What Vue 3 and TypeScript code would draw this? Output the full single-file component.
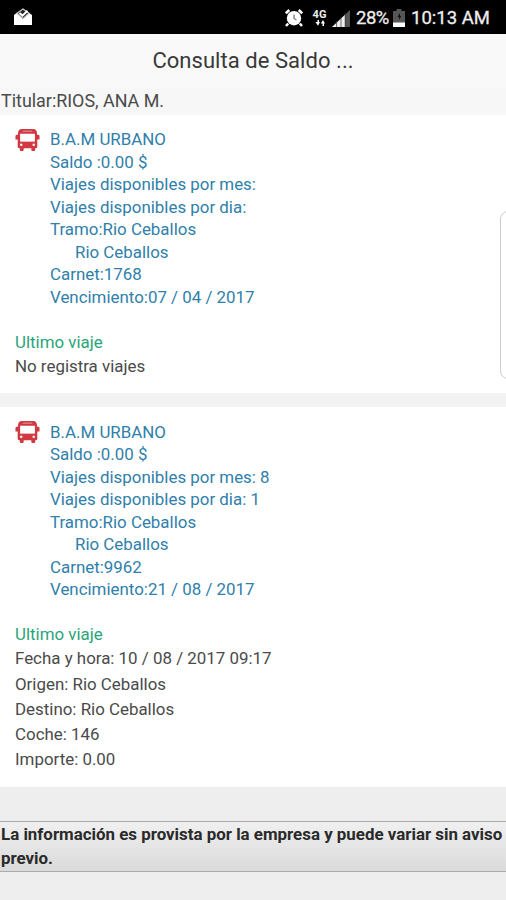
<script setup lang="ts">
interface Card {
  name: string
  balance: string
  perMonth: string
  perDay: string
  from: string
  to: string
  cardNumber: string
  expires: string
  lastTrip: string[]
}

const cards: Card[] = [
  {
    name: 'B.A.M URBANO',
    balance: '0.00 $',
    perMonth: '',
    perDay: '',
    from: 'Rio Ceballos',
    to: 'Rio Ceballos',
    cardNumber: '1768',
    expires: '07 / 04 / 2017',
    lastTrip: ['No registra viajes'],
  },
  {
    name: 'B.A.M URBANO',
    balance: '0.00 $',
    perMonth: '8',
    perDay: '1',
    from: 'Rio Ceballos',
    to: 'Rio Ceballos',
    cardNumber: '9962',
    expires: '21 / 08 / 2017',
    lastTrip: [
      'Fecha y hora: 10 / 08 / 2017 09:17',
      'Origen: Rio Ceballos',
      'Destino: Rio Ceballos',
      'Coche: 146',
      'Importe: 0.00',
    ],
  },
]
</script>

<template>
  <div class="screen">
    <div class="status">
      <svg class="mail" viewBox="0 0 18 18" width="18" height="18">
        <path d="M0 7 3.2 4.500 9 9.800 14.500 4.500 18 7V17H0z" fill="#fff" />
        <path d="M3 5.200 9 1l6 4.200-6 5.600z" fill="#222" stroke="#ccc" stroke-width="1.200" />
        <path d="m5.500 5 3 2.600 5-4.800" fill="none" stroke="#fff" stroke-width="2" />
      </svg>
      <div class="status-right">
        <svg class="alarm" viewBox="0 0 18 18" width="18" height="18">
          <circle cx="9" cy="9.2" r="7.2" fill="#fff" />
          <path d="M.8 4.3 4.3 1M17.2 4.3 13.7 1M3.2 14.5 1 17M14.8 14.5 17 17" stroke="#fff" stroke-width="2.5" />
          <path d="M9 5.500v4l2.500 1.500" fill="none" stroke="#777" stroke-width="1.300" />
        </svg>
        <div class="network">
          <span>4G</span>
          <svg viewBox="0 0 10 6" width="10" height="6">
            <path d="M2.5 0v2H0.5L3 5.8 5 2H4V0zM7.5 6V3.5H5.8L8 0l2 3.5H9V6z" fill="#fff" />
          </svg>
        </div>
        <svg class="signal" viewBox="0 0 18 17" width="18" height="17">
          <path d="M0 17 18 0V17z" fill="#555" />
          <path d="M0 17 13 4.8V17z" fill="#eee" />
          <path d="M4.6 11V17M9 7V17M13.2 3V17" stroke="#333" stroke-width=".7" />
        </svg>
        <span class="percent">28%</span>
        <svg class="battery" viewBox="0 0 12 18" width="12" height="18">
          <path d="M3.5 0h5v2H12v16H0V2h3.5z" fill="#555" />
          <path d="M0 13.500h12V18H0z" fill="#fff" />
          <path d="M7 4 4.5 8H6v3l2.3-4H7z" fill="#111" />
        </svg>
        <span class="clock">10:13 AM</span>
      </div>
    </div>

    <h1 class="title">Consulta de Saldo ...</h1>
    <div class="holder">Titular:RIOS, ANA M.</div>

    <section v-for="card in cards" :key="card.cardNumber" class="card">
      <div class="summary">
        <svg class="bus" viewBox="0 0 26 24" width="25" height="24">
          <path
            d="M7 .5h12q3.5 0 3.8 4l.2 2h1q1.5 0 1.5 1.5v3.5h-2.3V19q0 1.5-1.4 1.5H21v2q0 1-1 1h-2q-1 0-1-1v-2H9v2q0 1-1 1H6q-1 0-1-1v-2h-.8q-1.4 0-1.4-1.5v-7.5H.5V8Q.5 6.500 2 6.500h1l.2-2Q3.500.5 7 .5z"
            fill="#d03842"
          />
          <path d="M5.300 5.500h15.400v8.200H5.300z" fill="#fff" />
          <path d="M8 2.800h10" stroke="#e58a90" stroke-width="1.200" />
          <circle cx="6.500" cy="17" r="1.400" fill="#fbe5e6" />
          <circle cx="19.500" cy="17" r="1.400" fill="#fbe5e6" />
        </svg>
        <div class="details">
          <div class="name">{{ card.name }}</div>
          <div>Saldo :{{ card.balance }}</div>
          <div>Viajes disponibles por mes: {{ card.perMonth }}</div>
          <div>Viajes disponibles por dia: {{ card.perDay }}</div>
          <div>Tramo:{{ card.from }}</div>
          <div class="to">{{ card.to }}</div>
          <div>Carnet:{{ card.cardNumber }}</div>
          <div>Vencimiento:{{ card.expires }}</div>
        </div>
      </div>
      <div class="trip-title">Ultimo viaje</div>
      <div v-for="line in card.lastTrip" :key="line" class="trip-line">{{ line }}</div>
    </section>

    <footer class="notice">La información es provista por la empresa y puede variar sin aviso previo.</footer>

    <div class="scroll-handle"></div>
  </div>
</template>

<style>
body {
  margin: 0;
  background: #eee;
}
</style>

<style scoped>
.screen {
  position: relative;
  width: 506px;
  height: 900px;
  overflow: hidden;
  background: #eee;
  font-family: Roboto, sans-serif;
  font-size: 16.9px;
  color: #4a4a4a;
}
.status {
  display: flex;
  justify-content: space-between;
  align-items: center;
  box-sizing: border-box;
  height: 34px;
  padding: 2px 15px 0 14px;
  background: #000;
  color: #eee;
}
.status-right {
  display: flex;
  align-items: center;
}
.mail {
  margin-top: -2px;
}
.network {
  display: flex;
  flex-direction: column;
  align-items: center;
  width: 15px;
  margin: 0 5px 0 9px;
  font-size: 11px;
  font-weight: 700;
  line-height: 10px;
}
.signal {
  margin-right: 6px;
}
.percent,
.clock {
  font-size: 18.5px;
  line-height: 32px;
  font-weight: 400;
  -webkit-text-stroke: 0.3px #eee;
}
.percent {
  width: 34px;
  letter-spacing: -0.5px;
}
.battery {
  margin: 0 6px 0 3px;
}
.clock {
  width: 80px;
  white-space: nowrap;
}
.title {
  height: 53px;
  margin: 0;
  background: #f9f9f9;
  color: #383838;
  font-size: 22px;
  font-weight: 400;
  line-height: 53px;
  letter-spacing: 0.05px;
  text-align: center;
}
.holder {
  height: 28px;
  padding-left: 1px;
  background: #f7f7f7;
  font-size: 17.9px;
  line-height: 28px;
}
.card {
  padding: 13px 15px 14px;
  background: #fff;
}
.card + .card {
  border-top: 14px solid #f3f3f3;
}
.summary {
  display: flex;
  gap: 10px;
  margin-bottom: 22px;
  color: #2f80aa;
}
.bus {
  flex: none;
}
.details {
  line-height: 22.5px;
}
.card + .card .details {
  padding-top: 0.5px;
  margin-bottom: -0.5px;
}
.to {
  padding-left: 25px;
}
.trip-title {
  height: 24px;
  color: #2ba57a;
  line-height: 24px;
}
.trip-line {
  line-height: 25.3px;
}
.notice {
  margin-top: 34px;
  height: 49px;
  padding-left: 1px;
  border-top: 1px solid #aaa;
  border-bottom: 1px solid #aaa;
  background: linear-gradient(#f0f0f0, #dadada);
  color: #2a2a2a;
  font-weight: 700;
  line-height: 24px;
}
.scroll-handle {
  position: absolute;
  top: 211px;
  left: 500px;
  width: 20px;
  height: 166px;
  border: 1px solid #ccc;
  border-radius: 8px;
}
</style>
